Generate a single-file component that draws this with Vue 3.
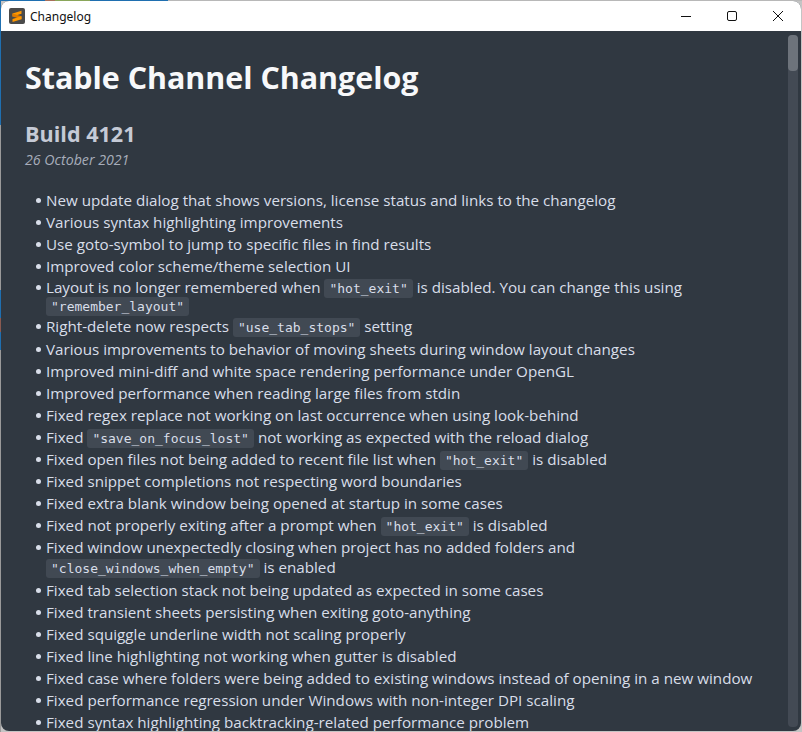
<script setup>
// each item is a list of parts, code parts are marked
const c = (text) => ({ code: true, text })

const items = [
  ['New update dialog that shows versions, license status and links to the changelog'],
  ['Various syntax highlighting improvements'],
  ['Use goto-symbol to jump to specific files in find results'],
  ['Improved color scheme/theme selection UI'],
  ['Layout is no longer remembered when ', c('"hot_exit"'), ' is disabled. You can change this using ', c('"remember_layout"')],
  ['Right-delete now respects ', c('"use_tab_stops"'), ' setting'],
  ['Various improvements to behavior of moving sheets during window layout changes'],
  ['Improved mini-diff and white space rendering performance under OpenGL'],
  ['Improved performance when reading large files from stdin'],
  ['Fixed regex replace not working on last occurrence when using look-behind'],
  ['Fixed ', c('"save_on_focus_lost"'), ' not working as expected with the reload dialog'],
  ['Fixed open files not being added to recent file list when ', c('"hot_exit"'), ' is disabled'],
  ['Fixed snippet completions not respecting word boundaries'],
  ['Fixed extra blank window being opened at startup in some cases'],
  ['Fixed not properly exiting after a prompt when ', c('"hot_exit"'), ' is disabled'],
  ['Fixed window unexpectedly closing when project has no added folders and ', c('"close_windows_when_empty"'), ' is enabled'],
  ['Fixed tab selection stack not being updated as expected in some cases'],
  ['Fixed transient sheets persisting when exiting goto-anything'],
  ['Fixed squiggle underline width not scaling properly'],
  ['Fixed line highlighting not working when gutter is disabled'],
  ['Fixed case where folders were being added to existing windows instead of opening in a new window'],
  ['Fixed performance regression under Windows with non-integer DPI scaling'],
  ['Fixed syntax highlighting backtracking-related performance problem'],
]

// a wrapped line holding only a code pill sits tighter
const endsInCode = (item) => item[item.length - 1].code === true
</script>

<template>
  <div class="desktop">
    <div class="window">
      <div class="titlebar">
        <svg class="app-icon" width="16" height="16" viewBox="0 0 16 16">
          <rect width="16" height="16" rx="2" fill="#4a4a4a" />
          <path d="M12.5 2.8v3L3.5 8.6v-3z" fill="#ff9800" />
          <path d="M3.5 5.6v3l9 2.6v-3z" fill="#e07b00" />
          <path d="M12.5 8.2v3L3.5 14v-3z" fill="#ff9800" />
        </svg>
        <span class="title">Changelog</span>
        <div class="controls">
          <svg width="46" height="30" viewBox="0 0 46 30">
            <path d="M18 15.5h10" stroke="#111" fill="none" />
          </svg>
          <svg width="46" height="30" viewBox="0 0 46 30">
            <rect x="18.5" y="10.5" width="9" height="9" rx="1.5" stroke="#111" fill="none" />
          </svg>
          <svg width="46" height="30" viewBox="0 0 46 30">
            <path d="M18 10l10 10M28 10L18 20" stroke="#111" fill="none" />
          </svg>
        </div>
      </div>
      <div class="body">
        <div class="content">
          <h1>Stable Channel Changelog</h1>
          <h2>Build 4121</h2>
          <p class="date">26 October 2021</p>
          <ul>
            <li v-for="(item, i) in items" :key="i" :class="{ tight: endsInCode(item) }">
              <template v-for="(part, j) in item" :key="j">
                <code v-if="part.code">{{ part.text }}</code>
                <template v-else>{{ part }}</template>
              </template>
            </li>
          </ul>
        </div>
        <div class="scrollbar">
          <div class="thumb"></div>
        </div>
      </div>
    </div>
  </div>
</template>

<style>
body {
  margin: 0;
  overflow: hidden;
}
</style>

<style scoped>
/* what shows of the desktop round the window */
.desktop {
  width: 802px;
  height: 732px;
  overflow: hidden;
  background:
    linear-gradient(90deg, #1f6fb0 0 45px, #a8705a 45px 55px, #8aa65a 55px 90px, #1f6fb0 90px 168px, #b8b8b8 168px) top / 100% 1px no-repeat,
    linear-gradient(180deg, #1f6fb0 0 125px, #9a9a9a 125px 290px, #1f6fb0 290px 318px, #8a5a50 318px 332px, #1f6fb0 332px 350px, #9a9a9a 350px) left / 1px 100% no-repeat,
    #c4c4c4;
}

.window {
  width: 800px;
  height: 730px;
  margin: 1px 0 0 1px;
  border-radius: 8px;
  overflow: hidden;
  display: flex;
  flex-direction: column;
  background: #303841;
  font-family: "Open Sans", sans-serif;
}

.titlebar {
  height: 30px;
  flex: none;
  display: flex;
  align-items: center;
  background: #fff;
  padding-left: 8px;
}

.app-icon {
  flex: none;
}

.title {
  margin-left: 5px;
  font-family: "Noto Sans", sans-serif;
  font-size: 12px;
  color: #111;
}

.controls {
  margin-left: auto;
  display: flex;
}

.body {
  flex: 1;
  min-height: 0;
  display: flex;
  overflow: hidden;
}

.content {
  flex: 1;
  min-width: 0;
  padding: 0 24px;
  color: #d8dee9;
  font-size: 15.2px;
  line-height: 20px;
}

h1 {
  margin: 27px 0 0;
  font-size: 30.4px;
  line-height: 40px;
  font-weight: 700;
  color: #f7f8fa;
}

h2 {
  margin: 21px 0 0;
  font-size: 21.6px;
  line-height: 30px;
  font-weight: 700;
  color: #c5cad6;
}

.date {
  margin: 2px 0 0;
  font-size: 14.2px;
  line-height: 18px;
  font-style: italic;
  color: #a7adba;
}

ul {
  list-style: none;
  margin: 21px 0 0;
  padding: 0 0 0 21px;
}

li {
  position: relative;
  margin-bottom: 2.1px;
}

li.tight {
  line-height: 18px;
  margin-top: 1px;
}

li::before {
  content: "";
  position: absolute;
  left: -10px;
  top: 8px;
  width: 5px;
  height: 5px;
  border-radius: 50%;
  background: #d8dee9;
}

li.tight::before {
  top: 7px;
}

code {
  font-family: "DejaVu Sans Mono", monospace;
  font-size: 13px;
  line-height: 1;
  padding: 2px 5px;
  border-radius: 3px;
  background: #414953;
  color: #d8dee9;
  white-space: nowrap;
}

.scrollbar {
  width: 10px;
  flex: none;
  margin: 4px 3px 4px 0;
  border-radius: 4px;
  background: #434a54;
}

.thumb {
  height: 36px;
  border-radius: 4px;
  background: #6d737b;
}
</style>
